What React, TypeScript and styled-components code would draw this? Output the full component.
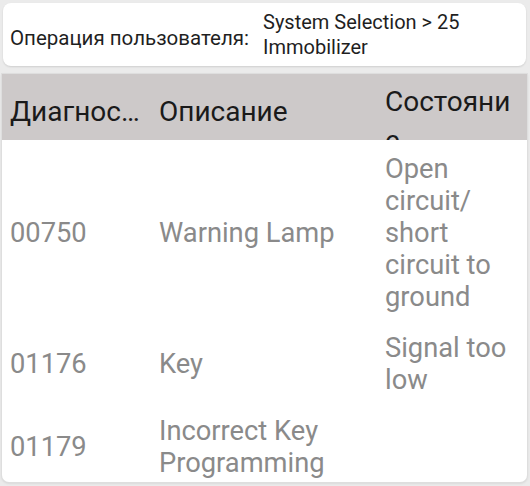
import React from "react";
import styled, { createGlobalStyle } from "styled-components";

const Global = createGlobalStyle`
  html, body { margin: 0; padding: 0; background: #ebebeb; }
  body { font-family: Roboto, "Noto Sans", "Liberation Sans", sans-serif; }
  #root { width: 530px; height: 486px; overflow: hidden; }
`;

const Page = styled.div`
  display: flex;
  flex-direction: column;
  gap: 8px;
  padding: 3px 2px 0 2px;
  height: 486px;
  box-sizing: border-box;
`;

const InfoCard = styled.div`
  display: flex;
  align-items: center;
  background: #fff;
  border-radius: 8px;
  margin: 0 2px 0 1px;
  height: 63px;
  padding: 0 7px;
  box-shadow: 0 1px 2px rgba(0, 0, 0, 0.12);
`;

const InfoLabel = styled.span`
  font-size: 20.5px;
  color: #1f1f1f;
  width: 253px;
  flex: none;
  padding-top: 6px;
`;

const InfoValue = styled.span`
  font-size: 20px;
  line-height: 25px;
  color: #1f1f1f;
  padding-top: 1px;
`;

const Table = styled.div`
  display: flex;
  flex-direction: column;
  background: #fff;
  border-radius: 0 0 7px 7px;
  height: 408px;
  overflow: hidden;
  box-shadow: 0 0 0 1px #dedede, 0 1px 3px rgba(0, 0, 0, 0.15);
  margin-right: 1px;
`;

const Body = styled.div`
  display: flex;
  flex-direction: column;
  padding-top: 3px;
`;

const Columns = "149px 226px 130px";

const HeaderRow = styled.div`
  display: grid;
  grid-template-columns: ${Columns};
  align-items: start;
  padding: 8px 0 0 8px;
  height: 66px;
  box-sizing: border-box;
  background: #cdc9c9;
  overflow: hidden;
  flex: none;
`;

const Row = styled.div`
  display: grid;
  grid-template-columns: ${Columns};
  align-items: center;
  padding: 9.5px 0 9.5px 8px;
`;

const HeadCell = styled.div<{ $wrap?: boolean }>`
  font-size: 28px;
  line-height: ${(p) => (p.$wrap ? "39px" : "32px")};
  margin-top: ${(p) => (p.$wrap ? "0" : "14px")};
  color: #1a1a1a;
  overflow-wrap: anywhere;
  white-space: ${(p) => (p.$wrap ? "normal" : "nowrap")};
`;

const Cell = styled.div`
  font-size: 27.3px;
  line-height: 32px;
  color: #8a8a8a;
`;

const rows = [
  { code: "00750", desc: "Warning Lamp", state: "Open circuit/ short circuit to ground" },
  { code: "01176", desc: "Key", state: "Signal too low" },
  { code: "01179", desc: "Incorrect Key Programming", state: "" },
];

export default function App() {
  return (
    <>
      <Global />
      <Page>
        <InfoCard>
          <InfoLabel>Операция пользователя:</InfoLabel>
          <InfoValue>
            System Selection &gt; 25
            <br />
            Immobilizer
          </InfoValue>
        </InfoCard>
        <Table>
          <HeaderRow>
            <HeadCell>Диагнос…</HeadCell>
            <HeadCell>Описание</HeadCell>
            <HeadCell $wrap>Состояние</HeadCell>
          </HeaderRow>
          <Body>
            {rows.map((r) => (
              <Row key={r.code}>
                <Cell>{r.code}</Cell>
                <Cell>{r.desc}</Cell>
                <Cell>{r.state}</Cell>
              </Row>
            ))}
          </Body>
        </Table>
      </Page>
    </>
  );
}
